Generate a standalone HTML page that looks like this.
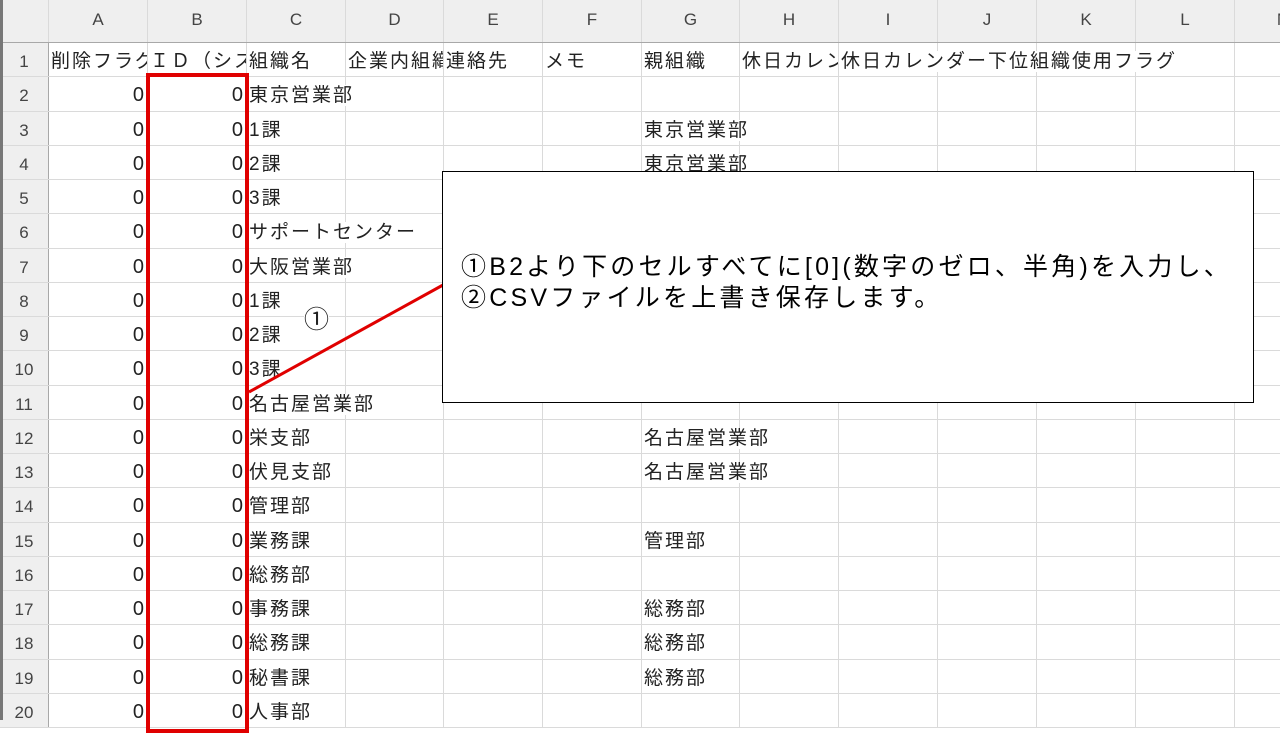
<!DOCTYPE html>
<html><head><meta charset="utf-8"><style>
*{margin:0;padding:0;box-sizing:border-box}
body{width:1280px;height:720px;overflow:hidden;background:#fff;position:relative;font-family:"Liberation Sans","Noto Sans CJK JP",sans-serif;color:#222}
.row{position:absolute;left:0;width:1400px;height:34.25px;display:flex;border-bottom:1px solid #dadada}
.row>div{flex:none;height:100%;border-right:1px solid #dadada;font-size:19px;letter-spacing:2px;line-height:37px;white-space:nowrap;overflow:visible;padding-left:2px}
.row>div.n{width:49px;background:#efefef;border-right:1.5px solid #a8a8a8;text-align:center;color:#444;font-size:17px;letter-spacing:0;padding:0;line-height:38px}
.row>div.r{text-align:right;padding:0 3px 0 0;letter-spacing:0;font-size:20px}
.w99{width:99px}.w98{width:98px}
.clip{overflow:hidden!important}
.hdr{position:absolute;left:0;top:0;width:1400px;height:43px;background:#efefef;border-bottom:1.5px solid #a8a8a8;display:flex}
.hdr>div{flex:none;height:100%;border-right:1px solid #dadada;text-align:center;font-size:17px;color:#444;line-height:40px}
.t{background:#fff;position:relative;z-index:1}
</style></head><body>
<div class="hdr"><div style="width:49px"></div><div class="w99">A</div><div class="w99">B</div><div class="w99">C</div><div class="w98">D</div><div class="w99">E</div><div class="w99">F</div><div class="w98">G</div><div class="w99">H</div><div class="w99">I</div><div class="w99">J</div><div class="w99">K</div><div class="w99">L</div><div class="w99">M</div></div>

<div class="row" style="top:43px"><div class="n">1</div><div class="w99 clip">削除フラグ</div><div class="w99 clip">ＩＤ（システム</div><div class="w99">組織名</div><div class="w98 clip">企業内組織コード</div><div class="w99">連絡先</div><div class="w99">メモ</div><div class="w98">親組織</div><div class="w99 clip">休日カレンダー</div><div class="w99"><span class="t">休日カレンダー下位組織使用フラグ</span></div><div class="w99"></div><div class="w99"></div><div class="w99"></div><div class="w99"></div></div>
<div class="row" style="top:77.25px"><div class="n">2</div><div class="w99 r">0</div><div class="w99 r">0</div><div class="w99"><span class="t">東京営業部</span></div><div class="w98"></div><div class="w99"></div><div class="w99"></div><div class="w98"></div><div class="w99"></div><div class="w99"></div><div class="w99"></div><div class="w99"></div><div class="w99"></div><div class="w99"></div></div>
<div class="row" style="top:111.5px"><div class="n">3</div><div class="w99 r">0</div><div class="w99 r">0</div><div class="w99">1課</div><div class="w98"></div><div class="w99"></div><div class="w99"></div><div class="w98"><span class="t">東京営業部</span></div><div class="w99"></div><div class="w99"></div><div class="w99"></div><div class="w99"></div><div class="w99"></div><div class="w99"></div></div>
<div class="row" style="top:145.75px"><div class="n">4</div><div class="w99 r">0</div><div class="w99 r">0</div><div class="w99">2課</div><div class="w98"></div><div class="w99"></div><div class="w99"></div><div class="w98"><span class="t">東京営業部</span></div><div class="w99"></div><div class="w99"></div><div class="w99"></div><div class="w99"></div><div class="w99"></div><div class="w99"></div></div>
<div class="row" style="top:180px"><div class="n">5</div><div class="w99 r">0</div><div class="w99 r">0</div><div class="w99">3課</div><div class="w98"></div><div class="w99"></div><div class="w99"></div><div class="w98"></div><div class="w99"></div><div class="w99"></div><div class="w99"></div><div class="w99"></div><div class="w99"></div><div class="w99"></div></div>
<div class="row" style="top:214.25px"><div class="n">6</div><div class="w99 r">0</div><div class="w99 r">0</div><div class="w99"><span class="t">サポートセンター</span></div><div class="w98"></div><div class="w99"></div><div class="w99"></div><div class="w98"></div><div class="w99"></div><div class="w99"></div><div class="w99"></div><div class="w99"></div><div class="w99"></div><div class="w99"></div></div>
<div class="row" style="top:248.5px"><div class="n">7</div><div class="w99 r">0</div><div class="w99 r">0</div><div class="w99"><span class="t">大阪営業部</span></div><div class="w98"></div><div class="w99"></div><div class="w99"></div><div class="w98"></div><div class="w99"></div><div class="w99"></div><div class="w99"></div><div class="w99"></div><div class="w99"></div><div class="w99"></div></div>
<div class="row" style="top:282.75px"><div class="n">8</div><div class="w99 r">0</div><div class="w99 r">0</div><div class="w99">1課</div><div class="w98"></div><div class="w99"></div><div class="w99"></div><div class="w98"></div><div class="w99"></div><div class="w99"></div><div class="w99"></div><div class="w99"></div><div class="w99"></div><div class="w99"></div></div>
<div class="row" style="top:317px"><div class="n">9</div><div class="w99 r">0</div><div class="w99 r">0</div><div class="w99">2課</div><div class="w98"></div><div class="w99"></div><div class="w99"></div><div class="w98"></div><div class="w99"></div><div class="w99"></div><div class="w99"></div><div class="w99"></div><div class="w99"></div><div class="w99"></div></div>
<div class="row" style="top:351.25px"><div class="n">10</div><div class="w99 r">0</div><div class="w99 r">0</div><div class="w99">3課</div><div class="w98"></div><div class="w99"></div><div class="w99"></div><div class="w98"></div><div class="w99"></div><div class="w99"></div><div class="w99"></div><div class="w99"></div><div class="w99"></div><div class="w99"></div></div>
<div class="row" style="top:385.5px"><div class="n">11</div><div class="w99 r">0</div><div class="w99 r">0</div><div class="w99"><span class="t">名古屋営業部</span></div><div class="w98"></div><div class="w99"></div><div class="w99"></div><div class="w98"></div><div class="w99"></div><div class="w99"></div><div class="w99"></div><div class="w99"></div><div class="w99"></div><div class="w99"></div></div>
<div class="row" style="top:419.75px"><div class="n">12</div><div class="w99 r">0</div><div class="w99 r">0</div><div class="w99">栄支部</div><div class="w98"></div><div class="w99"></div><div class="w99"></div><div class="w98"><span class="t">名古屋営業部</span></div><div class="w99"></div><div class="w99"></div><div class="w99"></div><div class="w99"></div><div class="w99"></div><div class="w99"></div></div>
<div class="row" style="top:454px"><div class="n">13</div><div class="w99 r">0</div><div class="w99 r">0</div><div class="w99">伏見支部</div><div class="w98"></div><div class="w99"></div><div class="w99"></div><div class="w98"><span class="t">名古屋営業部</span></div><div class="w99"></div><div class="w99"></div><div class="w99"></div><div class="w99"></div><div class="w99"></div><div class="w99"></div></div>
<div class="row" style="top:488.25px"><div class="n">14</div><div class="w99 r">0</div><div class="w99 r">0</div><div class="w99">管理部</div><div class="w98"></div><div class="w99"></div><div class="w99"></div><div class="w98"></div><div class="w99"></div><div class="w99"></div><div class="w99"></div><div class="w99"></div><div class="w99"></div><div class="w99"></div></div>
<div class="row" style="top:522.5px"><div class="n">15</div><div class="w99 r">0</div><div class="w99 r">0</div><div class="w99">業務課</div><div class="w98"></div><div class="w99"></div><div class="w99"></div><div class="w98">管理部</div><div class="w99"></div><div class="w99"></div><div class="w99"></div><div class="w99"></div><div class="w99"></div><div class="w99"></div></div>
<div class="row" style="top:556.75px"><div class="n">16</div><div class="w99 r">0</div><div class="w99 r">0</div><div class="w99">総務部</div><div class="w98"></div><div class="w99"></div><div class="w99"></div><div class="w98"></div><div class="w99"></div><div class="w99"></div><div class="w99"></div><div class="w99"></div><div class="w99"></div><div class="w99"></div></div>
<div class="row" style="top:591px"><div class="n">17</div><div class="w99 r">0</div><div class="w99 r">0</div><div class="w99">事務課</div><div class="w98"></div><div class="w99"></div><div class="w99"></div><div class="w98">総務部</div><div class="w99"></div><div class="w99"></div><div class="w99"></div><div class="w99"></div><div class="w99"></div><div class="w99"></div></div>
<div class="row" style="top:625.25px"><div class="n">18</div><div class="w99 r">0</div><div class="w99 r">0</div><div class="w99">総務課</div><div class="w98"></div><div class="w99"></div><div class="w99"></div><div class="w98">総務部</div><div class="w99"></div><div class="w99"></div><div class="w99"></div><div class="w99"></div><div class="w99"></div><div class="w99"></div></div>
<div class="row" style="top:659.5px"><div class="n">19</div><div class="w99 r">0</div><div class="w99 r">0</div><div class="w99">秘書課</div><div class="w98"></div><div class="w99"></div><div class="w99"></div><div class="w98">総務部</div><div class="w99"></div><div class="w99"></div><div class="w99"></div><div class="w99"></div><div class="w99"></div><div class="w99"></div></div>
<div class="row" style="top:693.75px"><div class="n">20</div><div class="w99 r">0</div><div class="w99 r">0</div><div class="w99">人事部</div><div class="w98"></div><div class="w99"></div><div class="w99"></div><div class="w98"></div><div class="w99"></div><div class="w99"></div><div class="w99"></div><div class="w99"></div><div class="w99"></div><div class="w99"></div></div>

<div style="position:absolute;left:0;top:0;width:3px;height:720px;background:#777;z-index:2"></div>
<div style="position:absolute;left:146px;top:73px;width:103px;height:660px;border:4px solid #e00000;z-index:3"></div>
<svg style="position:absolute;left:0;top:0;z-index:3" width="1280" height="720"><line x1="249" y1="392" x2="443" y2="285" stroke="#e00000" stroke-width="3"/></svg>
<div style="position:absolute;left:304px;top:306px;font-size:25px;line-height:28px;z-index:3;background:#fff">①</div>
<div style="position:absolute;left:442px;top:171px;width:812px;height:232px;background:#fff;border:1px solid #000;z-index:4"></div>
<div style="position:absolute;left:461px;top:252px;font-size:25px;letter-spacing:3.2px;line-height:31px;color:#000;z-index:5;white-space:nowrap">①B2より下のセルすべてに[0](数字のゼロ、半角)を入力し、<br>②CSVファイルを上書き保存します。</div>
</body></html>
